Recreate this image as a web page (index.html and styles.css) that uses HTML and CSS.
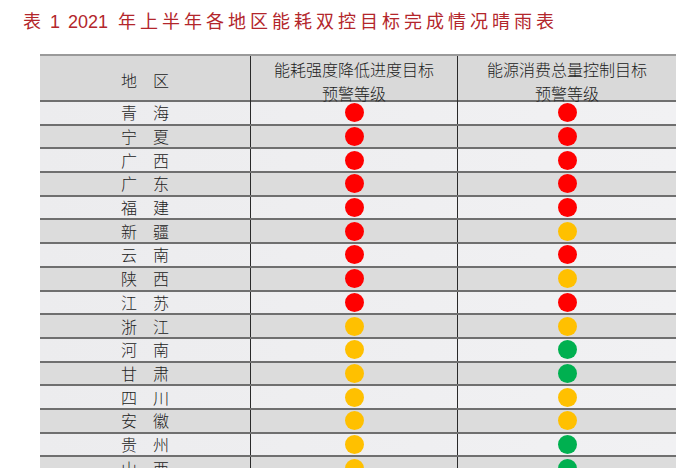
FILE: index.html
```html
<!DOCTYPE html>
<html lang="zh-CN">
<head>
<meta charset="utf-8">
<title>2021年上半年各地区能耗双控目标完成情况晴雨表</title>
<link rel="stylesheet" href="styles.css">
</head>
<body>
<h1 class="title"><span class="cjk">表</span><span class="num one">1</span><span class="num year">2021</span><span class="cjk rest">年上半年各地区能耗双控目标完成情况晴雨表</span></h1>
<div class="table">
  <div class="row head">
    <div class="cell">地　区</div>
    <div class="cell two"><div class="line">能耗强度降低进度目标</div><div class="line">预警等级</div></div>
    <div class="cell two"><div class="line">能源消费总量控制目标</div><div class="line">预警等级</div></div>
  </div>
  <div class="row light"><div class="cell">青　海</div><div class="cell"><span class="dot red"></span></div><div class="cell"><span class="dot red"></span></div></div>
  <div class="row dark"><div class="cell">宁　夏</div><div class="cell"><span class="dot red"></span></div><div class="cell"><span class="dot red"></span></div></div>
  <div class="row light"><div class="cell">广　西</div><div class="cell"><span class="dot red"></span></div><div class="cell"><span class="dot red"></span></div></div>
  <div class="row dark"><div class="cell">广　东</div><div class="cell"><span class="dot red"></span></div><div class="cell"><span class="dot red"></span></div></div>
  <div class="row light"><div class="cell">福　建</div><div class="cell"><span class="dot red"></span></div><div class="cell"><span class="dot red"></span></div></div>
  <div class="row dark"><div class="cell">新　疆</div><div class="cell"><span class="dot red"></span></div><div class="cell"><span class="dot yellow"></span></div></div>
  <div class="row light"><div class="cell">云　南</div><div class="cell"><span class="dot red"></span></div><div class="cell"><span class="dot red"></span></div></div>
  <div class="row dark"><div class="cell">陕　西</div><div class="cell"><span class="dot red"></span></div><div class="cell"><span class="dot yellow"></span></div></div>
  <div class="row light"><div class="cell">江　苏</div><div class="cell"><span class="dot red"></span></div><div class="cell"><span class="dot red"></span></div></div>
  <div class="row dark"><div class="cell">浙　江</div><div class="cell"><span class="dot yellow"></span></div><div class="cell"><span class="dot yellow"></span></div></div>
  <div class="row light"><div class="cell">河　南</div><div class="cell"><span class="dot yellow"></span></div><div class="cell"><span class="dot green"></span></div></div>
  <div class="row dark"><div class="cell">甘　肃</div><div class="cell"><span class="dot yellow"></span></div><div class="cell"><span class="dot green"></span></div></div>
  <div class="row light"><div class="cell">四　川</div><div class="cell"><span class="dot yellow"></span></div><div class="cell"><span class="dot yellow"></span></div></div>
  <div class="row dark"><div class="cell">安　徽</div><div class="cell"><span class="dot yellow"></span></div><div class="cell"><span class="dot yellow"></span></div></div>
  <div class="row light"><div class="cell">贵　州</div><div class="cell"><span class="dot yellow"></span></div><div class="cell"><span class="dot green"></span></div></div>
  <div class="row dark"><div class="cell">山　西</div><div class="cell"><span class="dot yellow"></span></div><div class="cell"><span class="dot green"></span></div></div>
</div>
</body>
</html>
```

FILE: styles.css
```css
html, body {
  margin: 0;
  padding: 0;
  background: #ffffff;
  overflow: hidden;
}

body {
  font-family: "Noto Sans CJK SC", "Noto Sans", sans-serif;
}

.title {
  margin: 8px 0 0 23px;
  height: 24px;
  font-size: 18px;
  line-height: 24px;
  font-weight: 400;
  color: #b3262b;
  white-space: nowrap;
}

.title .cjk {
  letter-spacing: 4px;
}

.title .num {
  font-family: "Liberation Sans", Arial, sans-serif;
}

.title .one {
  margin-left: 5px;
}

.title .year {
  margin-left: 8px;
}

.title .rest {
  margin-left: 10px;
}

.table {
  margin: 22px 0 0 40px;
  width: 636px;
  color: #222222;
  font-size: 16px;
  font-weight: 300;
}

.row {
  display: grid;
  grid-template-columns: 210px 207px 219px;
  box-sizing: border-box;
  height: 23.7px;
  border-top: 2px solid #6f6f6f;
}

.row.head {
  height: 46px;
  background: #d9d9d9;
  border-top: 2px solid #9a9a9a;
}

.row.light {
  background: linear-gradient(to right, #ececee, #f1f1f3);
}

.row.dark {
  background: #dcdcdc;
}

.cell {
  display: flex;
  align-items: center;
  justify-content: center;
  text-align: center;
  line-height: 21px;
  white-space: nowrap;
}

.cell.two {
  flex-direction: column;
  padding-top: 2px;
}

.cell .line {
  height: 23.5px;
  line-height: 23.5px;
}

.cell + .cell {
  border-left: 1px solid #2a2a2a;
}

.dot {
  display: block;
  width: 19px;
  height: 19px;
  border-radius: 50%;
}

.dot.red { background: #ff0000; }
.dot.yellow { background: #ffc000; }
.dot.green { background: #00b050; }
```
